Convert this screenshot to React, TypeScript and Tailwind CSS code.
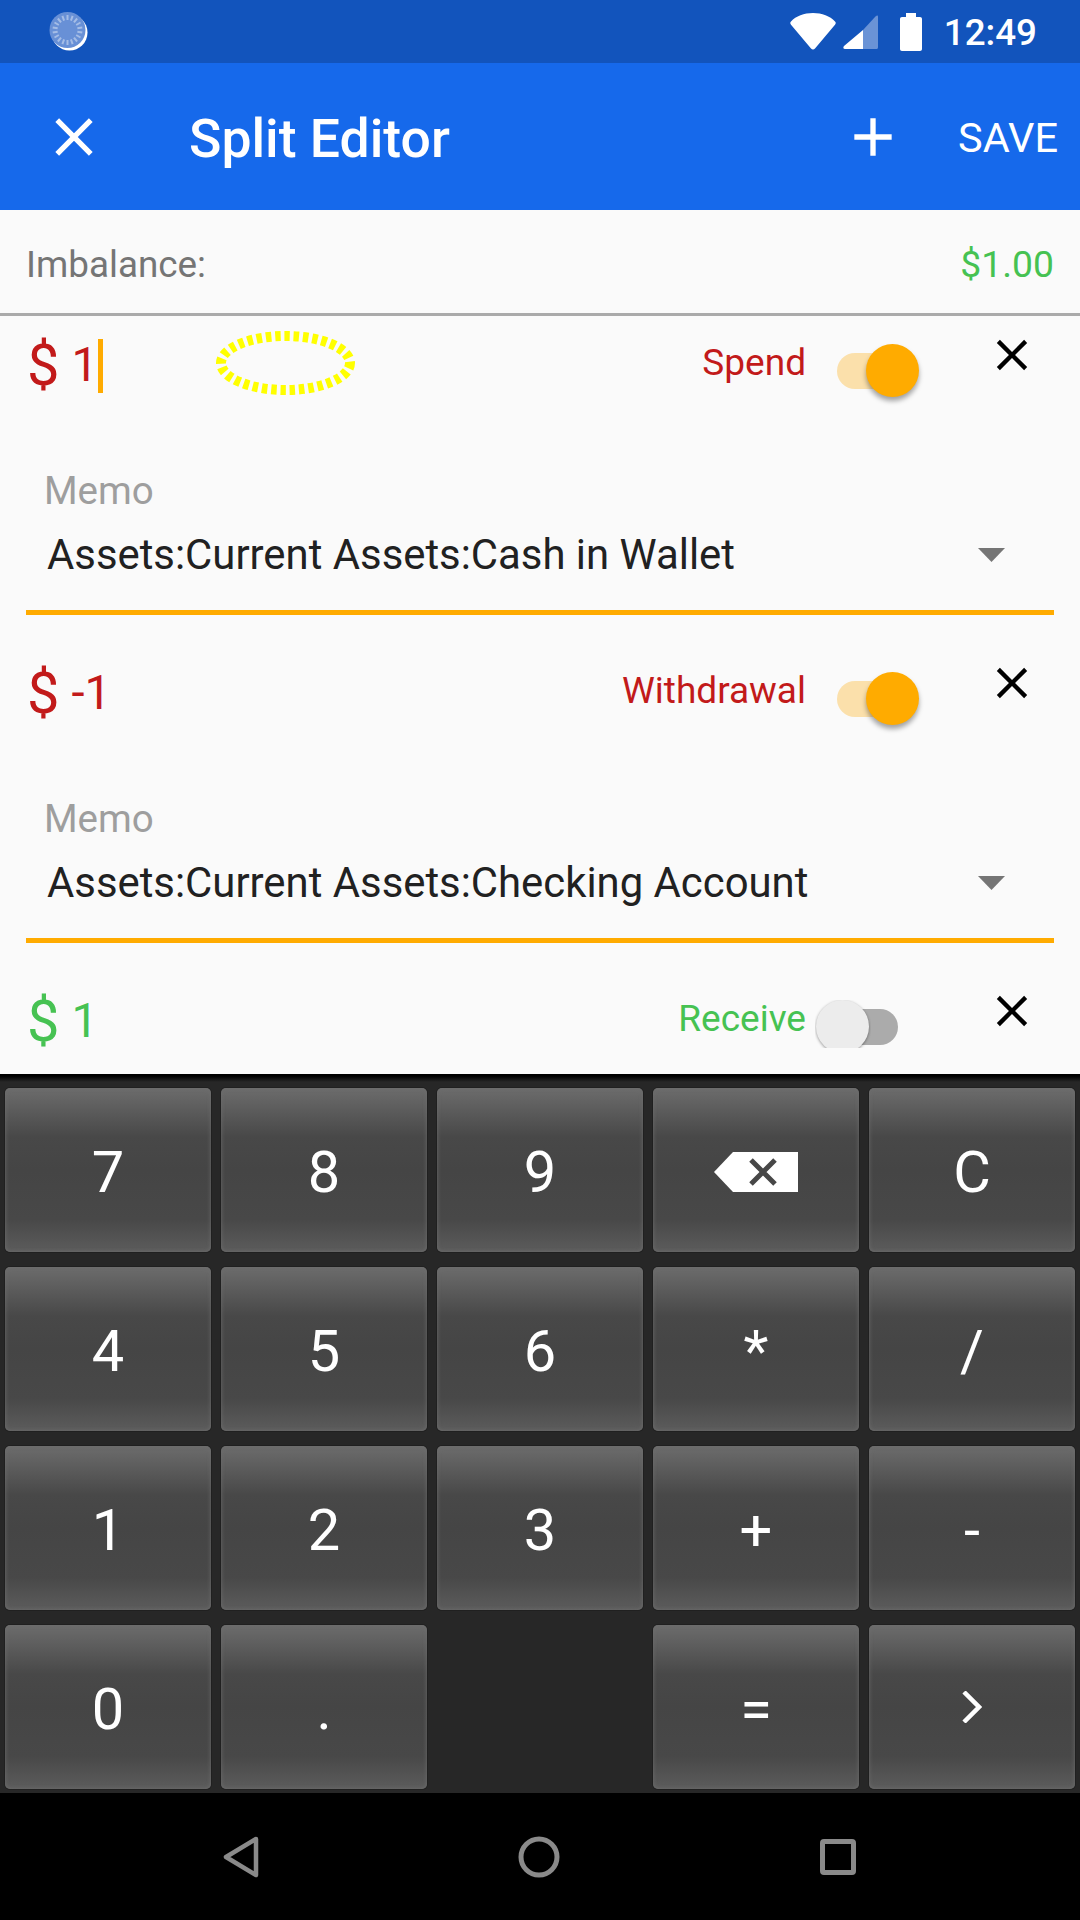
const CLOSE = "M19 6.41L17.59 5 12 10.59 6.41 5 5 6.41 10.59 12 5 17.59 6.41 19 12 13.41 17.59 19 19 17.59 13.41 12z";
const ADD = "M19 13h-6v6h-2v-6H5v-2h6V5h2v6h6v2z";

function Spinner() {
  const ticks = Array.from({ length: 18 }, (_, i) => (i * 360) / 18);
  return (
    <svg width="40" height="40" viewBox="0 0 40 40" className="block">
      <circle cx="20.500" cy="20.500" r="18" fill="#ffffff" />
      <circle cx="18.500" cy="18" r="18" fill="#6890d6" />
      {ticks.map((a) => (
        <line key={a} x1="18.500" y1="3" x2="18.500" y2="8" stroke="#a5bde6" strokeWidth="2" transform={`rotate(${a} 18.500 18)`} />
      ))}
    </svg>
  );
}

function StatusBar() {
  return (
    <div className="flex h-[63px] items-center bg-[#1254bc] font-['Roboto',sans-serif] text-white">
      <div className="ml-[49px]"><Spinner /></div>
      <div className="flex-1" />
      <svg width="46" height="37" viewBox="0 0 46 37" className="block">
        <path d="M23 0C14 0 6 3 1 8.5c-1 1-1 2 0 3.2L21 35.500c1.200 1.400 2.800 1.400 4 0L45 11.700c1-1.200 1-2.200 0-3.200C40 3 32 0 23 0z" fill="#fff" />
      </svg>
      <svg width="35" height="36" viewBox="0 0 35 36" className="ml-[7px] block">
        <path d="M20 16 L20 35 L2 35 C0 35 0 33 1 32Z" fill="#fff" />
        <path d="M20 16 L32 3 C34 1 35 1 35 3 L35 33 C35 35 34 35 33 35 L20 35Z" fill="#6a93d6" />
      </svg>
      <svg width="22" height="38" viewBox="0 0 22 38" className="ml-[22px] block">
        <path d="M6 0h10v4h4c1.200 0 2 .8 2 2v30c0 1.200-.8 2-2 2H2c-1.200 0-2-.8-2-2V6c0-1.200.8-2 2-2h4z" fill="#fff" />
      </svg>
      <span className="ml-[22px] mr-[43px] mt-[3px] text-[36.75px] font-medium leading-none">12:49</span>
    </div>
  );
}

function AppBar() {
  return (
    <div className="flex h-[147px] items-center bg-[#1669eb] font-['Roboto',sans-serif] text-white">
      <svg width="64" height="64" viewBox="0 0 24 24" className="ml-[42px] block" fill="#fff"><path d={CLOSE} /></svg>
      <span className="ml-[83px] mt-[5px] text-[53.5px] font-medium leading-none">Split Editor</span>
      <div className="flex-1" />
      <svg width="64" height="64" viewBox="0 0 24 24" className="block" fill="#fff"><path d={ADD} /></svg>
      <span className="ml-[53px] mr-[22px] mt-[2px] text-[41.5px] leading-none">SAVE</span>
    </div>
  );
}

function Toggle({ on }: { on: boolean }) {
  return (
    <div className={`relative mt-[37px] ml-[31px] h-[36px] w-[61px] rounded-[18px] ${on ? "bg-[#fbe0ab]" : "bg-[#ababab]"}`}>
      {on ? (
        <div className="absolute left-[29px] top-[-9px] h-[53px] w-[53px] rounded-full bg-[#ffab00] shadow-[0_4px_5px_rgba(0,0,0,0.35)]" />
      ) : (
        <div className="absolute left-[-22px] top-[-9px] h-[48px] w-[56px] overflow-hidden pl-[1px]">
          <div className="h-[53px] w-[53px] rounded-full bg-[#ececec] shadow-[0_1px_3px_rgba(0,0,0,0.4)]" />
        </div>
      )}
    </div>
  );
}

function SplitRow({
  amount, label, color, on, account, cursor, ellipse,
}: {
  amount: string; label: string; color: string; on: boolean; account?: string; cursor?: boolean; ellipse?: boolean;
}) {
  return (
    <div className="relative h-[328px] w-full shrink-0 font-['Roboto',sans-serif]">
      <div className="flex h-[96px] items-start">
        <div className="ml-[27px] mt-[25px] flex leading-[48px]" style={{ color }}>
          <span className="text-[57.75px]">$</span>
          <span className="ml-[12px] text-[47.25px]">{amount}</span>
          {cursor && <span className="ml-[0px] mt-[-2px] h-[54px] w-[5px] bg-[#ffab00]" />}
        </div>
        <div className="flex-1" />
        <span className="mt-[27px] text-[37px] leading-[40px]" style={{ color }}>{label}</span>
        <Toggle on={on} />
        <svg width="52" height="52" viewBox="0 0 24 24" className="ml-[88px] mr-[42px] mt-[13px] block shrink-0" fill="#000"><path d={CLOSE} /></svg>
      </div>
      {ellipse && (
        <svg width="142" height="68" viewBox="0 0 142 68" className="absolute left-[215px] top-[13px] block">
          <ellipse cx="70.500" cy="34" rx="64.500" ry="27" fill="none" stroke="#ffff00" strokeWidth="10" strokeDasharray="5.500 3.800" />
        </svg>
      )}
      {account && (
        <>
          <div className="ml-[44px] mt-[59px] text-[38.5px] leading-[40px] text-[#9e9e9e]">Memo</div>
          <div className="ml-[47px] mr-[75px] mt-[20px] flex h-[48px] items-center justify-between">
            <span className="text-[41.85px] leading-[48px] text-[#212121]">{account}</span>
            <svg width="27" height="14" viewBox="0 0 27 14" className="block"><path d="M0 0h27L13.500 14z" fill="#757575" /></svg>
          </div>
          <div className="mx-[26px] mt-[31px] h-[5px] bg-[#ffab00]" />
        </>
      )}
    </div>
  );
}

function Key({ children }: { children: React.ReactNode }) {
  return (
    <div className="flex h-[164px] items-center justify-center rounded-[5px] bg-[linear-gradient(180deg,#6c6c6c_0%,#484848_30%,#454545_50%,#484848_80%,#5c5c5c_100%)] font-['Roboto',sans-serif] text-[57.75px] leading-none text-white shadow-[0_0_0_1px_#202020,inset_0_0_4px_#6e6e6e]">
      {children}
    </div>
  );
}

function Keypad() {
  const icon = (k: string) => {
    if (k === "back")
      return (
        <svg width="84" height="40" viewBox="0 0 84 40" className="mt-[3px] block">
          <path d="M0 20 L19 0 H84 V40 H19 Z" fill="#fff" />
          <path d="M37 8 L61 32 M61 8 L37 32" stroke="#474747" strokeWidth="5" />
        </svg>
      );
    if (k === "next")
      return (
        <svg width="20" height="32" viewBox="0 0 20 32" className="block">
          <path d="M2 1 L17 16 L2 31" fill="none" stroke="#fff" strokeWidth="4.500" />
        </svg>
      );
    return <span className="block pt-[6px]">{k}</span>;
  };
  const keys = ["7", "8", "9", "back", "C", "4", "5", "6", "*", "/", "1", "2", "3", "+", "-", "0", ".", "", "=", "next"];
  return (
    <div className="h-[719px] bg-[#272727] bg-[linear-gradient(180deg,#000000_0px,#000000_2px,#272727_8px)] px-[5px] pt-[14px]">
      <div className="grid grid-cols-[repeat(5,206px)] grid-rows-[repeat(4,164px)] gap-x-[10px] gap-y-[15px]">
        {keys.map((k, i) => (k === "" ? <div key={i} /> : <Key key={i}>{icon(k)}</Key>))}
      </div>
    </div>
  );
}

function NavBar() {
  return (
    <div className="relative flex h-[127px] items-center bg-black">
      <svg width="36" height="42" viewBox="0 0 36 42" className="ml-[223px] block">
        <path d="M33 3 L3 21 L33 39 Z" fill="none" stroke="#8a8a8a" strokeWidth="4.500" strokeLinejoin="round" />
      </svg>
      <svg width="42" height="42" viewBox="0 0 42 42" className="ml-[259px] block">
        <circle cx="21" cy="21" r="18" fill="none" stroke="#8a8a8a" strokeWidth="5" />
      </svg>
      <svg width="36" height="36" viewBox="0 0 36 36" className="ml-[260px] block">
        <rect x="2.500" y="2.500" width="31" height="31" rx="1.500" fill="none" stroke="#8a8a8a" strokeWidth="5" />
      </svg>
    </div>
  );
}

export default function App() {
  return (
    <div className="flex h-[1920px] w-[1080px] flex-col overflow-hidden bg-[#fafafa]">
      <StatusBar />
      <AppBar />
      <div className="flex h-[103px] items-center justify-between pl-[26px] pr-[26px] pt-[7px] font-['Roboto',sans-serif] leading-none">
        <span className="text-[36.8px] text-[#757575]">Imbalance:</span>
        <span className="text-[37.3px] text-[#46c252]">$1.00</span>
      </div>
      <div className="h-[3px] bg-[#aaaaaa]" />
      <div className="flex h-[758px] flex-col overflow-hidden">
        <SplitRow amount="1" label="Spend" color="#c21a1a" on account="Assets:Current Assets:Cash in Wallet" cursor ellipse />
        <SplitRow amount="-1" label="Withdrawal" color="#c21a1a" on account="Assets:Current Assets:Checking Account" />
        <SplitRow amount="1" label="Receive" color="#46c252" on={false} />
      </div>
      <Keypad />
      <NavBar />
    </div>
  );
}
